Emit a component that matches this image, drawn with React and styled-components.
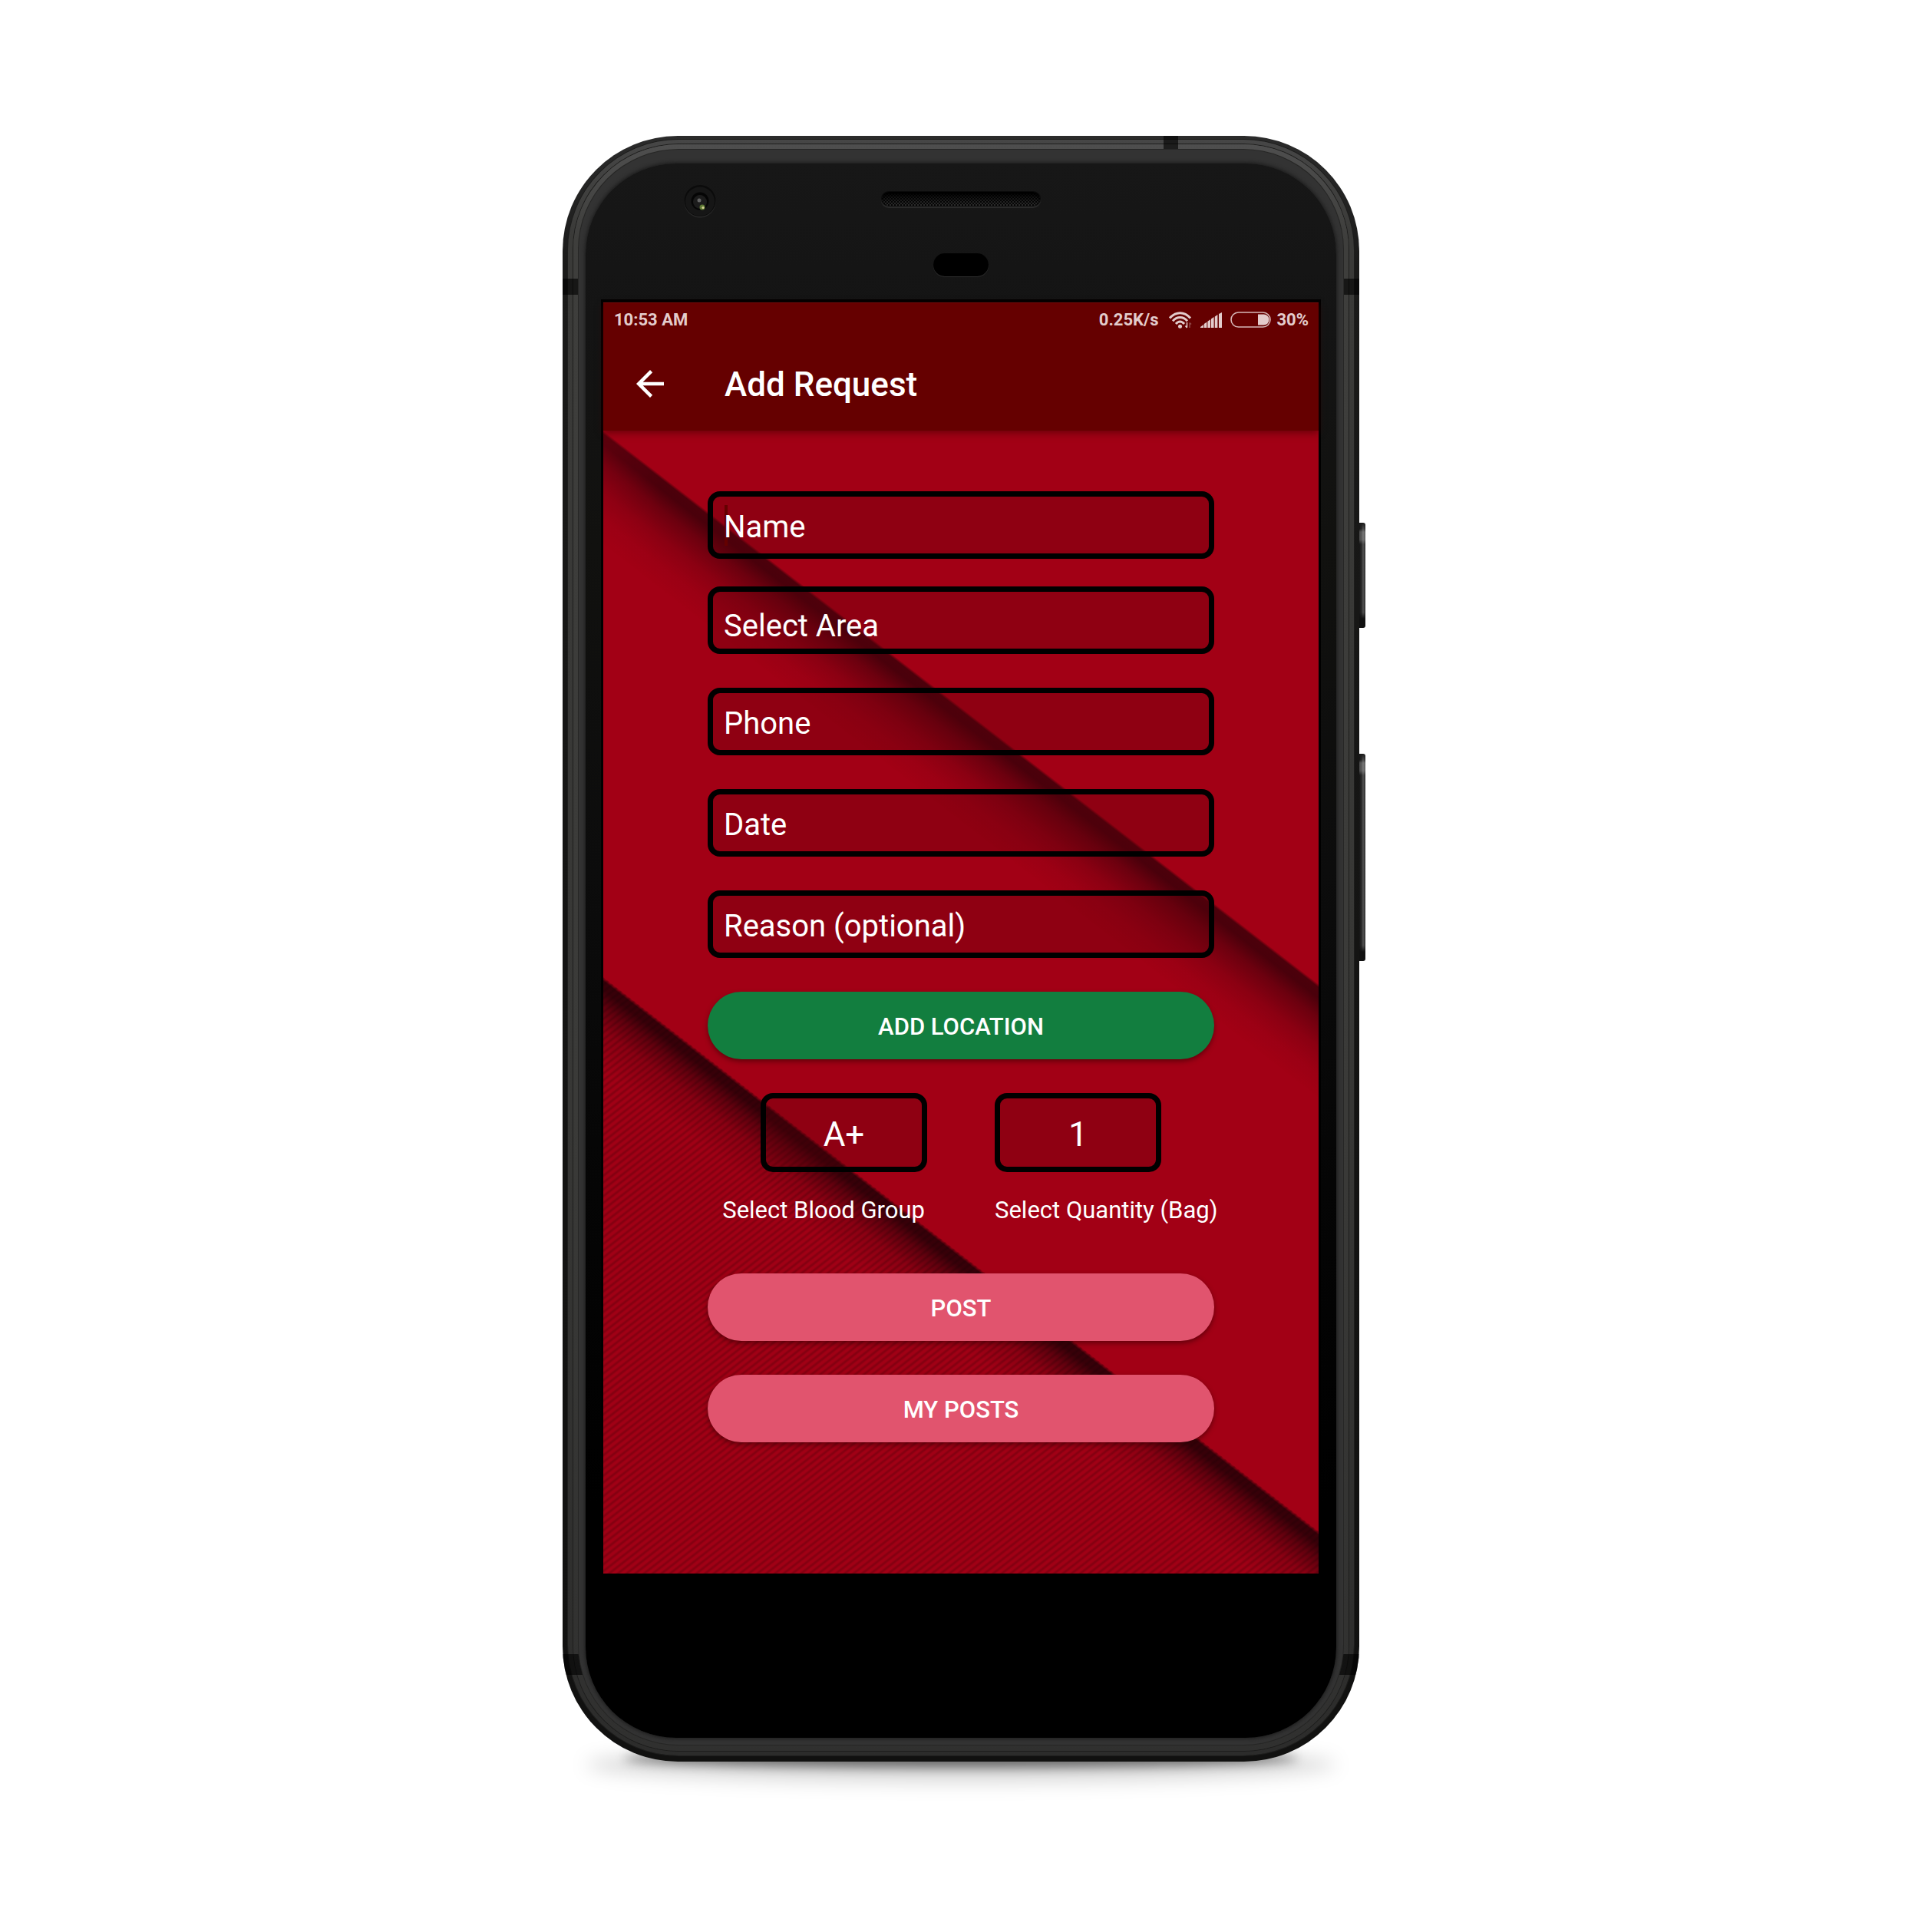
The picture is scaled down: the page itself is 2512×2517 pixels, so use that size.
import React from "react";
import styled, { createGlobalStyle, css } from "styled-components";

const GlobalStyle = createGlobalStyle`
  *, *::before, *::after { box-sizing: border-box; }
  body { margin: 0; background: #fff; }
  button, input, select { font: inherit; color: inherit; margin: 0; }
`;

const Page = styled.main`
  min-height: 100vh;
  display: flex;
  justify-content: center;
  align-items: flex-start;
  padding: 177px 0 222px;
  font-family: Roboto, "Liberation Sans", sans-serif;
  color: #fff;
`;

const Device = styled.div`
  position: relative;
  z-index: 0;
  display: flex;
  align-items: flex-start;
  width: min(1046px, 100%);
`;

const GroundShadow = styled.div`
  position: absolute;
  z-index: -1;
  border-radius: 50%;
  left: ${(p) => p.$inset}px;
  right: ${(p) => p.$inset + 8}px;
  bottom: -${(p) => p.$drop}px;
  height: ${(p) => p.$height}px;
  background: rgba(0, 0, 0, ${(p) => p.$alpha});
  filter: blur(${(p) => p.$blur}px);
`;

const Shell = styled.div`
  position: relative;
  flex: 1;
  min-width: 0;
  overflow: hidden;
  border-radius: 150px;
  padding: 5px 7px 8px;
  background: linear-gradient(#2b2b2b, #1a1a19 8%, #141413 50%, #111110);
`;

const Band = styled.div`
  border-radius: ${(p) => p.$radius}px;
  padding: ${(p) => p.$pad};
  background: ${(p) => p.$fill};
  box-shadow: 0 0 0 1px #1d1d1c;
`;

const Ring = styled.div`
  position: relative;
  z-index: 2;
  border-radius: 130px;
  padding: 18px 9px 9px;
  background: #333;
  box-shadow: 0 0 0 1px #262625;
`;

const Glass = styled.div`
  border-radius: 118px;
  padding: 0 20px;
  background: linear-gradient(#171717, #141414 10%, #11110f 24%, #0c0c0c 45%, #050505 65%, #000 85%);
  box-shadow: 0 0 5px 1px #1a1a1a;
`;

const Antenna = styled.span`
  position: absolute;
  z-index: 1;
  background: rgba(0, 0, 0, 0.62);
  ${(p) => p.$place}
`;

const Keys = styled.div`
  display: flex;
  flex-direction: column;
  gap: 164px;
  padding-top: 504px;
  width: 8px;
`;

const Key = styled.span`
  height: ${(p) => p.$height}px;
  border-radius: 0 3px 3px 0;
  background:
    linear-gradient(#1a1a1a, transparent 8px, rgba(255, 255, 255, 0.22) 12px, rgba(255, 255, 255, 0.22) 22px, transparent 28px, transparent calc(100% - 20px), #111 calc(100% - 12px)),
    linear-gradient(90deg, #151515, #2b2b2b 40%, #505050 60%, #454545 80%, #1e1e1e);
`;

const Sensors = styled.div`
  display: grid;
  grid-template-columns: 1fr auto 1fr;
  grid-template-rows: 42px 30px;
  row-gap: 47px;
  align-items: center;
  justify-items: center;
  height: 177px;
  padding: 28px 0 30px;
`;

const Camera = styled.svg`
  justify-self: start;
  margin-left: 107px;
  width: 44px;
  height: 44px;
`;

const Speaker = styled.span`
  width: 206px;
  height: 18px;
  margin-bottom: 6px;
  border-radius: 9px;
  background:
    linear-gradient(#000, rgba(0, 0, 0, 0.1)),
    repeating-conic-gradient(#333 0 25%, #080808 0 50%) 0 0 / 4px 4px;
  box-shadow: inset 0 2px 3px #000, 0 0 0 1px #0a0a0a, 0 2px 1px 1px #2c2c2c;
`;

const Proximity = styled.span`
  grid-column: 2;
  width: 72px;
  height: 30px;
  border-radius: 15px;
  background: #000;
  box-shadow: 0 1px 1px #2e2e2e;
`;

const Screen = styled.section`
  display: flex;
  flex-direction: column;
  height: 1660px;
  border: 3px solid #000;
  border-top-width: 4px;
  border-bottom: 0;
  background: #a20015;
`;

const Chin = styled.div`
  height: 214px;
`;

const Header = styled.header`
  position: relative;
  z-index: 1;
  background: #650000;
  border-top: 1px solid #7a0a0a;
  box-shadow: 0 3px 9px rgba(60, 0, 0, 0.55);
`;

const StatusBar = styled.div`
  display: flex;
  align-items: center;
  height: 43px;
  padding: 0 13px 0 14px;
  font-size: 22px;
  line-height: 26px;
  font-weight: 700;
  color: #e3cccc;

  svg { display: block; }
`;

const Clock = styled.time`
  margin-right: auto;
`;

const StatusIcons = styled.span`
  display: flex;
  align-items: center;
  gap: 11px;
  padding: 0 7px 0 14px;
`;

const Toolbar = styled.div`
  display: flex;
  align-items: center;
  gap: 70px;
  height: 123px;
  padding-left: 34px;
`;

const BackButton = styled.button`
  display: flex;
  padding: 0;
  border: 0;
  background: none;
`;

const Title = styled.h1`
  margin: 0;
  padding-top: 3px;
  font-size: 44px;
  line-height: 52px;
  font-weight: 500;
`;

const Content = styled.div`
  position: relative;
  flex: 1;
`;

const Backdrop = styled.svg`
  position: absolute;
  inset: 0;
  z-index: 0;
  width: 100%;
  height: 100%;
`;

const Form = styled.form`
  position: relative;
  display: flex;
  flex-direction: column;
  gap: 44px;
  padding: 79px 136px 0;
`;

const FieldPair = styled.div`
  display: flex;
  flex-direction: column;
  gap: 36px;
`;

const outlined = css`
  appearance: none;
  display: block;
  border: 7px solid #000;
  border-radius: 16px;
  outline: none;
  background-color: rgba(90, 0, 10, 0.26);
`;

const fieldBox = css`
  ${outlined}
  width: 100%;
  height: 88px;
  font-size: 40px;
  line-height: 48px;
`;

const TextField = styled.input`
  ${fieldBox}
  padding: 4px 14px 0;
  ${(p) =>
    p.$caret &&
    css`
      background-image: linear-gradient(#640000, #640000);
      background-repeat: no-repeat;
      background-size: 4px 53px;
      background-position: 15px 11px;
    `}

  &::placeholder { color: #fff; opacity: 1; }
`;

const AreaSelect = styled.select`
  ${fieldBox}
  padding: 16px 14px 0;
`;

const PillButton = styled.button`
  height: 88px;
  border: 0;
  border-radius: 44px;
  padding: 3px 0 0;
  font-size: 31px;
  line-height: 36px;
  font-weight: 500;
  background: ${(p) => (p.$tone === "green" ? "#127e3f" : "#e1546e")};
  box-shadow: 0 3px 6px rgba(40, 0, 0, 0.5);
`;

const Pickers = styled.div`
  display: grid;
  grid-template-columns: minmax(0, 1fr) minmax(0, 1fr);
  gap: 88px;
  margin-bottom: 20px;
`;

const Picker = styled.div`
  display: flex;
  flex-direction: column;
  align-items: ${(p) => p.$align};
  gap: 32px;
`;

const PickerSelect = styled.select`
  ${outlined}
  width: 217px;
  height: 103px;
  padding: 4px 0 0;
  font-size: 44px;
  line-height: 52px;
  text-align: center;
  text-align-last: center;
`;

const PickerLabel = styled.label`
  padding-right: 3px;
  font-size: 31px;
  line-height: 36px;
  white-space: nowrap;
`;

function WifiIcon() {
  return (
    <svg width="30" height="22" viewBox="0 0 30 22" fill="none" stroke="currentColor" strokeWidth="3">
      <path d="M1 8.400C9-.600 20-.600 28 8.400" />
      <path d="M5 12.200C10.500 6 18.500 6 24 12.200" />
      <path d="M9 16C12.500 12 16.500 12 20 16" />
      <circle cx="14.500" cy="19.300" r="2.500" fill="currentColor" stroke="none" />
      <path d="M23.500 14v6.500M21.500 18.500l2 2.500" strokeWidth="1.500" />
      <path d="M27 21v-6.500M29 16.500l-2-2" strokeWidth="1.500" opacity="0.35" />
    </svg>
  );
}

function SignalIcon() {
  return (
    <svg width="28" height="20" viewBox="0 0 28 20" fill="currentColor">
      <path d="M0 20v-1l4-3v4z" />
      <path d="M4.800 20v-5l3.600-2.500V20zM9.400 20v-8.300l3.600-2.500V20zM14 20V8.600l3.600-2.500V20zM18.800 20V5.500L22.400 3v17zM24 20V2l4-2v20z" />
    </svg>
  );
}

function BatteryIcon() {
  return (
    <svg width="53" height="21" viewBox="0 0 53 21">
      <rect x="1" y="1" width="51" height="19" rx="9.500" fill="none" stroke="currentColor" strokeWidth="1.600" opacity="0.9" />
      <path d="M36 3.500h7.500a7 7 0 0 1 0 14H36z" fill="currentColor" />
    </svg>
  );
}

function ArrowBackIcon() {
  return (
    <svg width="54" height="54" viewBox="0 0 24 24" fill="#fff">
      <path d="M20 11H7.830l5.590-5.590L12 4l-8 8 8 8 1.410-1.410L7.830 13H20v-2z" />
    </svg>
  );
}

function CameraLens() {
  return (
    <Camera viewBox="0 0 44 44" aria-hidden="true">
      <circle cx="22" cy="23" r="20.500" fill="#2a2a2a" />
      <circle cx="22" cy="21.500" r="20.500" fill="#0b0b0b" />
      <circle cx="22" cy="22.500" r="19" fill="#161616" />
      <circle cx="22" cy="22" r="11.500" fill="#050505" />
      <circle cx="22" cy="23" r="9" fill="#1c1c1c" />
      <circle cx="21" cy="21" r="2.500" fill="#777" opacity="0.8" />
      <circle cx="25" cy="30" r="3.500" fill="#5f7a35" />
      <circle cx="26" cy="30.500" r="1.600" fill="#d8d59a" />
    </Camera>
  );
}

function PaperBackdrop() {
  return (
    <Backdrop viewBox="0 0 932 1489" preserveAspectRatio="none" aria-hidden="true">
      <defs>
        <linearGradient id="foldShade" gradientUnits="userSpaceOnUse" x1="0" y1="0" x2="-72.100" y2="93.200">
          <stop offset="0" stopColor="#1c0006" stopOpacity="0" />
          <stop offset="0.03" stopColor="#1c0006" stopOpacity="0.64" />
          <stop offset="0.12" stopColor="#1c0006" stopOpacity="0.66" />
          <stop offset="0.3" stopColor="#1c0006" stopOpacity="0.4" />
          <stop offset="0.55" stopColor="#1c0006" stopOpacity="0.17" />
          <stop offset="0.78" stopColor="#1c0006" stopOpacity="0.05" />
          <stop offset="1" stopColor="#1c0006" stopOpacity="0" />
        </linearGradient>
        <linearGradient id="foldShadeDeep" gradientUnits="userSpaceOnUse" x1="0" y1="712" x2="-57.800" y2="786.600">
          <stop offset="0" stopColor="#120004" stopOpacity="0" />
          <stop offset="0.04" stopColor="#120004" stopOpacity="0.74" />
          <stop offset="0.14" stopColor="#120004" stopOpacity="0.74" />
          <stop offset="0.32" stopColor="#120004" stopOpacity="0.44" />
          <stop offset="0.58" stopColor="#120004" stopOpacity="0.15" />
          <stop offset="1" stopColor="#120004" stopOpacity="0" />
        </linearGradient>
        <linearGradient id="taper" x1="0" y1="0" x2="1" y2="0">
          <stop offset="0" stopColor="#ccc" />
          <stop offset="0.08" stopColor="#fff" />
        </linearGradient>
        <mask id="taperMask" maskUnits="userSpaceOnUse" x="0" y="0" width="932" height="1489">
          <rect width="932" height="1489" fill="url(#taper)" />
        </mask>
        <pattern id="pinstripe" width="14" height="7" patternUnits="userSpaceOnUse" patternTransform="rotate(-38)">
          <rect width="14" height="7" fill="#a00015" />
          <rect y="0" width="14" height="4" fill="#930013" />
          <rect y="1" width="14" height="2" fill="#850011" />
        </pattern>
      </defs>
      <path d="M0 0L932 721V1489H0z" fill="url(#foldShade)" mask="url(#taperMask)" />
      <path d="M0 712L932 1434V1489H0z" fill="url(#pinstripe)" />
      <path d="M0 712L932 1434V1489H0z" fill="url(#foldShadeDeep)" />
    </Backdrop>
  );
}

export default function App() {
  return (
    <>
      <GlobalStyle />
      <Page>
        <Device>
          <GroundShadow $inset={30} $drop={26} $height={44} $alpha={0.16} $blur={12} />
          <GroundShadow $inset={80} $drop={8} $height={24} $alpha={0.5} $blur={7} />
          <Shell>
            <Antenna $place="top:0;left:783px;width:19px;height:20px;" />
            <Antenna $place="top:186px;left:0;width:21px;height:21px;" />
            <Antenna $place="top:186px;right:0;width:21px;height:21px;" />
            <Antenna $place="bottom:113px;left:0;width:30px;height:27px;" />
            <Antenna $place="bottom:113px;right:0;width:30px;height:27px;" />
            <Band $radius={144} $pad="6px 7px 6px" $fill="linear-gradient(#464646, #3a3a38 6%, #373735 60%, #2c2c2b)">
              <Band $radius={137} $pad="7px 7px 8px" $fill="linear-gradient(#4e4e4e, #3e3e3c 6%, #3a3a38 60%, #30302f)">
                <Ring>
                  <Glass>
                    <Sensors>
                      <CameraLens />
                      <Speaker />
                      <Proximity />
                    </Sensors>
                    <Screen>
                      <Header>
                        <StatusBar>
                          <Clock>10:53 AM</Clock>
                          <span>0.25K/s</span>
                          <StatusIcons aria-hidden="true">
                            <WifiIcon />
                            <SignalIcon />
                            <BatteryIcon />
                          </StatusIcons>
                          <span>30%</span>
                        </StatusBar>
                        <Toolbar>
                          <BackButton type="button" aria-label="Back">
                            <ArrowBackIcon />
                          </BackButton>
                          <Title>Add Request</Title>
                        </Toolbar>
                      </Header>
                      <Content>
                        <PaperBackdrop />
                        <Form onSubmit={(e) => e.preventDefault()}>
                          <FieldPair>
                            <TextField $caret aria-label="Name" placeholder="Name" />
                            <AreaSelect aria-label="Select Area" defaultValue="">
                              <option value="">Select Area</option>
                            </AreaSelect>
                          </FieldPair>
                          <TextField type="tel" aria-label="Phone" placeholder="Phone" />
                          <TextField aria-label="Date" placeholder="Date" />
                          <TextField aria-label="Reason (optional)" placeholder="Reason (optional)" />
                          <PillButton type="button" $tone="green">ADD LOCATION</PillButton>
                          <Pickers>
                            <Picker $align="flex-end">
                              <PickerSelect id="blood-group" defaultValue="A+">
                                <option>A+</option>
                              </PickerSelect>
                              <PickerLabel htmlFor="blood-group">Select Blood Group</PickerLabel>
                            </Picker>
                            <Picker $align="flex-start">
                              <PickerSelect id="quantity" defaultValue="1">
                                <option>1</option>
                              </PickerSelect>
                              <PickerLabel htmlFor="quantity">Select Quantity (Bag)</PickerLabel>
                            </Picker>
                          </Pickers>
                          <PillButton type="submit">POST</PillButton>
                          <PillButton type="button">MY POSTS</PillButton>
                        </Form>
                      </Content>
                    </Screen>
                    <Chin />
                  </Glass>
                </Ring>
              </Band>
            </Band>
          </Shell>
          <Keys aria-hidden="true">
            <Key $height={137} />
            <Key $height={270} />
          </Keys>
        </Device>
      </Page>
    </>
  );
}
